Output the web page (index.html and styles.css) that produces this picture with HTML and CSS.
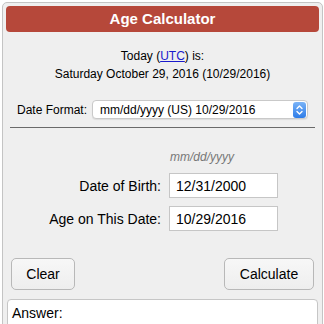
FILE: index.html
```html
<!DOCTYPE html>
<html>
<head>
<meta charset="utf-8">
<link rel="stylesheet" href="styles.css">
</head>
<body>
<div class="panel">
  <div class="header">Age Calculator</div>
  <div class="today">Today (<a href="#" class="link">UTC</a>) is:<br>Saturday October 29, 2016 (10/29/2016)</div>
  <div class="format-row">
    <span class="format-label">Date Format:</span>
    <div class="select">
      <span class="select-text">mm/dd/yyyy (US) 10/29/2016</span>
      <span class="stepper">
        <svg width="13" height="16" viewBox="0 0 13 16"><path d="M4 6.5 L6.5 4 L9 6.5 M4 9.5 L6.5 12 L9 9.5" fill="none" stroke="#fff" stroke-width="1.4" stroke-linecap="round" stroke-linejoin="round"/></svg>
      </span>
    </div>
  </div>
  <div class="divider"></div>
  <div class="form-grid">
    <span></span>
    <span class="hint">mm/dd/yyyy</span>
    <label class="field-label">Date of Birth:</label>
    <input class="field" type="text" value="12/31/2000">
    <label class="field-label">Age on This Date:</label>
    <input class="field" type="text" value="10/29/2016">
  </div>
  <div class="buttons">
    <button class="btn btn-clear">Clear</button>
    <button class="btn btn-calc">Calculate</button>
  </div>
  <div class="answer">Answer:</div>
</div>
</body>
</html>
```
FILE: styles.css
```css
html, body {
  margin: 0;
  padding: 0;
  background: #fff;
  overflow: hidden;
}
body {
  font-family: "Liberation Sans", Arial, sans-serif;
  color: #000;
}
.panel {
  box-sizing: border-box;
  width: 321px;
  margin: 2px 0 0 2px;
  height: 340px;
  border: 1px solid #c4c4c4;
  border-radius: 5px;
  background: #efefef;
  padding-top: 3px;
}
.header {
  margin: 0 3px;
  height: 26px;
  line-height: 26px;
  background: #b6483a;
  border-radius: 4px;
  color: #fff;
  font-weight: bold;
  font-size: 15px;
  text-align: center;
}
.today {
  margin-top: 15px;
  font-size: 12px;
  line-height: 18px;
  text-align: center;
}
.link {
  color: #1a1acc;
  text-decoration: underline;
}
.format-row {
  margin-top: 17px;
  display: flex;
  align-items: center;
  padding-left: 14px;
  font-size: 12px;
}
.format-label {
  width: 75px;
}
.select {
  box-sizing: border-box;
  width: 216px;
  height: 19px;
  display: flex;
  align-items: center;
  justify-content: space-between;
  background: #fff;
  border: 1px solid #c9c9c9;
  border-radius: 4px;
  padding: 0 1px 0 7px;
  box-shadow: 0 1px 1px rgba(0,0,0,0.08);
}
.select-text {
  font-size: 12px;
}
.stepper {
  width: 13px;
  height: 16px;
  border-radius: 3px;
  background: linear-gradient(#7ab3f7, #2d7ce8);
  display: flex;
}
.divider {
  margin: 8px 7px 0 7px;
  border-top: 1px solid #6a6a6a;
}
.form-grid {
  margin-top: 21px;
  display: grid;
  grid-template-columns: 158px 109px;
  column-gap: 8px;
  row-gap: 8px;
  align-items: center;
}
.hint {
  font-size: 12px;
  line-height: 16px;
  font-style: italic;
  color: #777;
  padding-left: 1px;
}
.field-label {
  font-size: 14px;
  text-align: right;
}
.field {
  box-sizing: border-box;
  width: 109px;
  height: 25px;
  margin: 0;
  border: 1px solid #c6c6c6;
  border-radius: 0;
  background: #fff;
  font-family: "Liberation Sans", Arial, sans-serif;
  font-size: 14px;
  color: #000;
  padding: 0 0 0 6px;
  outline: none;
}
.buttons {
  margin-top: 27px;
  display: flex;
  justify-content: space-between;
  padding: 0 8px;
}
.btn {
  box-sizing: border-box;
  height: 32px;
  border: 1px solid #b8b8b8;
  border-radius: 5px;
  background: linear-gradient(#f7f7f7, #eeeeee);
  font-family: "Liberation Sans", Arial, sans-serif;
  font-size: 14px;
  color: #000;
  padding: 0;
}
.btn-clear {
  width: 64px;
}
.btn-calc {
  width: 90px;
}
.answer {
  margin: 9px 4px 0 4px;
  height: 60px;
  background: #fff;
  border: 1px solid #c6c6c6;
  border-radius: 4px;
  padding: 5px 4px;
  font-size: 14px;
  line-height: 16px;
}
```
